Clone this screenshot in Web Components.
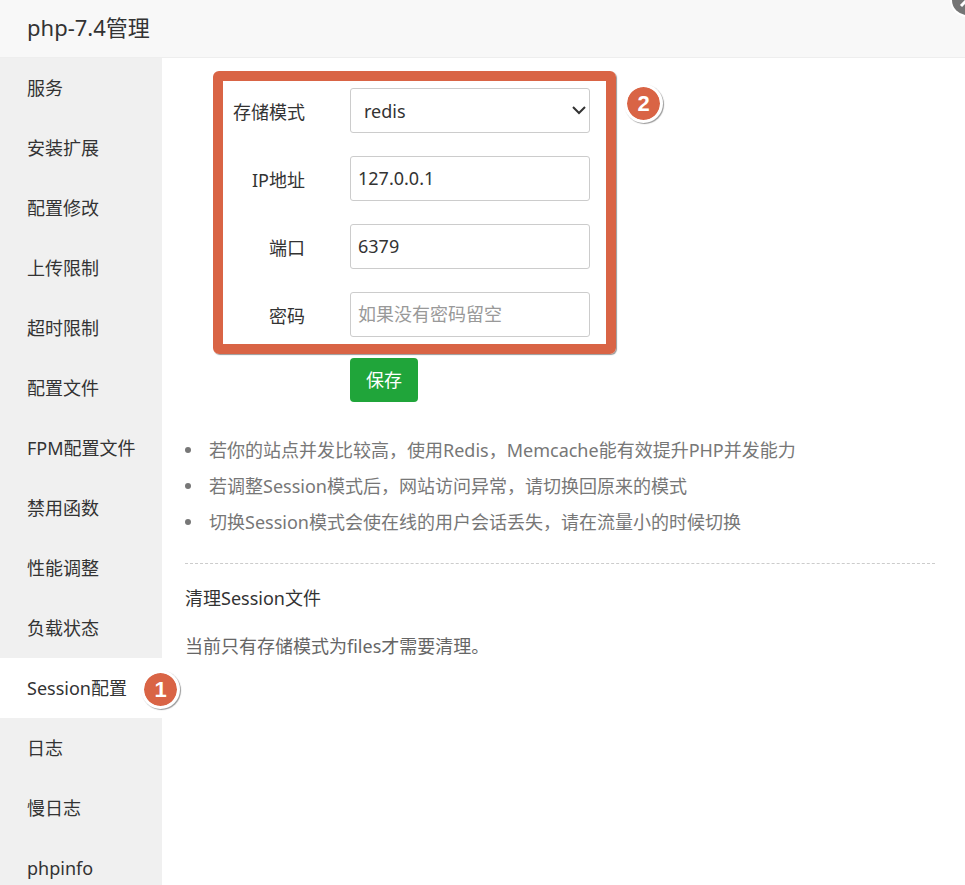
<!DOCTYPE html>
<html lang="zh-CN">
<head>
<meta charset="utf-8">
<meta name="viewport" content="width=device-width, initial-scale=1">
<title>php-7.4管理</title>
<style>
  body {
    margin: 0;
    background: #fff;
    color: #333;
    font: 18px/36px "Noto Sans", "Noto Sans CJK SC", sans-serif;
  }
</style>
</head>
<body>
<manage-dialog>
  <span slot="title">php-7.4管理</span>

  <side-menu slot="menu">
    <menu-item>服务</menu-item>
    <menu-item>安装扩展</menu-item>
    <menu-item>配置修改</menu-item>
    <menu-item>上传限制</menu-item>
    <menu-item>超时限制</menu-item>
    <menu-item>配置文件</menu-item>
    <menu-item>FPM配置文件</menu-item>
    <menu-item>禁用函数</menu-item>
    <menu-item>性能调整</menu-item>
    <menu-item>负载状态</menu-item>
    <menu-item active>Session配置<step-badge slot="badge">1</step-badge></menu-item>
    <menu-item>日志</menu-item>
    <menu-item>慢日志</menu-item>
    <menu-item>phpinfo</menu-item>
  </side-menu>

  <session-form>
    <form-field label="存储模式" type="select">
      <option>redis</option>
      <option>files</option>
      <option>memcache</option>
    </form-field>
    <form-field label="IP地址" value="127.0.0.1"></form-field>
    <form-field label="端口" value="6379"></form-field>
    <form-field label="密码" placeholder="如果没有密码留空"></form-field>
    <step-badge slot="badge">2</step-badge>
  </session-form>

  <help-list>
    <li>若你的站点并发比较高，使用Redis，Memcache能有效提升PHP并发能力</li>
    <li>若调整Session模式后，网站访问异常，请切换回原来的模式</li>
    <li>切换Session模式会使在线的用户会话丢失，请在流量小的时候切换</li>
  </help-list>

  <clean-section>
    <span slot="title">清理Session文件</span>
    当前只有存储模式为files才需要清理。
  </clean-section>
</manage-dialog>

<script>
const makeTemplate = (html) => {
  const template = document.createElement("template");
  template.innerHTML = html;
  return template;
};

class BaseElement extends HTMLElement {
  constructor() {
    super();
    this.attachShadow({ mode: "open" });
    this.shadowRoot.appendChild(this.constructor.template.content.cloneNode(true));
  }
}

// whole window: title bar, menu on the left, content on the right
class ManageDialog extends BaseElement {
  static template = makeTemplate(/*html*/ `
    <style>
      :host {
        display: flex;
        flex-direction: column;
        position: relative;
        height: 100vh;
        overflow: hidden;
      }
      header {
        flex: none;
        padding: 9px 27px 12px;
        background: #f8f8f8;
        border-bottom: 1px solid #eee;
      }
      h1 {
        margin: 0;
        font-size: 22px;
        font-weight: 400;
      }
      .close {
        position: absolute;
        top: -15px;
        right: -17px;
        width: 30px;
        height: 30px;
        padding: 0;
        border: 0;
        border-radius: 50%;
        background: #757575;
        box-shadow: 0 0 0 2px #fff;
      }
      .close svg {
        display: block;
      }
      .body {
        display: flex;
        flex: 1;
        min-height: 0;
      }
      main {
        flex: 1;
        min-width: 0;
        padding: 13px 30px 0 23px;
      }
    </style>
    <header><h1><slot name="title"></slot></h1></header>
    <button class="close" type="button" aria-label="关闭">
      <svg width="30" height="30" viewBox="0 0 30 30" fill="none" stroke="#fff" stroke-width="3">
        <path d="M9 9l12 12M21 9L9 21"/>
      </svg>
    </button>
    <div class="body">
      <slot name="menu"></slot>
      <main><slot></slot></main>
    </div>
  `);
}
customElements.define("manage-dialog", ManageDialog);

class SideMenu extends BaseElement {
  static template = makeTemplate(/*html*/ `
    <style>
      :host {
        display: block;
        flex: none;
        width: 162px;
        background: #f0f0f0;
      }
    </style>
    <nav><slot></slot></nav>
  `);
}
customElements.define("side-menu", SideMenu);

class MenuItem extends BaseElement {
  static template = makeTemplate(/*html*/ `
    <style>
      :host {
        display: block;
        position: relative;
      }
      :host([active]) {
        background: #fff;
      }
      a {
        display: block;
        padding: 12px 0 12px 27px;
        color: inherit;
        text-decoration: none;
        white-space: nowrap;
      }
      ::slotted(step-badge) {
        position: absolute;
        top: 12px;
        right: -18px;
      }
    </style>
    <a href="#"><slot></slot></a>
    <slot name="badge"></slot>
  `);
}
customElements.define("menu-item", MenuItem);

class StepBadge extends BaseElement {
  static template = makeTemplate(/*html*/ `
    <style>
      :host {
        display: block;
        box-sizing: border-box;
        width: 39px;
        height: 39px;
        border: 3px solid #fff;
        border-radius: 50%;
        background: #d96445;
        background-clip: padding-box;
        box-shadow: 1px 1px 1px #999;
        color: #fff;
        font: bold 22px/33px "Liberation Sans", sans-serif;
        text-align: center;
      }
    </style>
    <slot></slot>
  `);
}
customElements.define("step-badge", StepBadge);

class SessionForm extends BaseElement {
  static template = makeTemplate(/*html*/ `
    <style>
      :host {
        display: block;
        padding-left: 28px;
      }
      .top {
        display: flex;
        align-items: flex-start;
        gap: 8px;
      }
      .frame {
        display: flex;
        flex-direction: column;
        gap: 23px;
        padding: 7px 16px 7px 10px;
        border: 10px solid #d96445;
        border-radius: 6px;
        box-shadow: 1px 1px 1px #999;
      }
      ::slotted(step-badge) {
        margin-top: 13px;
      }
      button {
        display: block;
        margin: 4px 0 0 137px;
        padding: 4px 16px;
        border: 0;
        border-radius: 4px;
        background: #20a53a;
        color: #fff;
        font: inherit;
      }
    </style>
    <form>
      <div class="top">
        <div class="frame"><slot></slot></div>
        <slot name="badge"></slot>
      </div>
      <button type="button">保存</button>
    </form>
  `);
}
customElements.define("session-form", SessionForm);

class FormField extends BaseElement {
  static template = makeTemplate(/*html*/ `
    <style>
      :host {
        display: grid;
        grid-template-columns: 72px 240px;
        column-gap: 45px;
        align-items: center;
      }
      label {
        padding-top: 2px;
        text-align: right;
        white-space: nowrap;
      }
      .control {
        display: block;
        position: relative;
      }
      input, select {
        display: block;
        box-sizing: border-box;
        width: 100%;
        height: 45px;
        padding: 0 7px 2px;
        border: 1px solid #ccc;
        border-radius: 3px;
        background: #fff;
        color: #333;
        font: inherit;
      }
      select {
        appearance: none;
        padding: 0 32px 0 13px;
      }
      input::placeholder {
        color: #999;
      }
      svg {
        position: absolute;
        top: 18px;
        right: 3px;
        pointer-events: none;
      }
    </style>
    <label for="control"></label>
    <div class="control"></div>
  `);

  connectedCallback() {
    this.shadowRoot.querySelector("label").textContent = this.getAttribute("label");
    const box = this.shadowRoot.querySelector(".control");

    if (this.getAttribute("type") === "select") {
      box.innerHTML = `
        <select id="control"></select>
        <svg width="16" height="10" viewBox="0 0 16 10" fill="none" stroke="#333" stroke-width="2">
          <path d="M2 1l6 6 6-6"/>
        </svg>`;
      box.querySelector("select").append(...this.querySelectorAll("option"));
      return;
    }

    const input = document.createElement("input");
    input.id = "control";
    input.type = "text";
    input.value = this.getAttribute("value") || "";
    input.placeholder = this.getAttribute("placeholder") || "";
    box.appendChild(input);
  }
}
customElements.define("form-field", FormField);

class HelpList extends BaseElement {
  static template = makeTemplate(/*html*/ `
    <style>
      :host {
        display: block;
        margin-top: 30px;
        padding-bottom: 23px;
        border-bottom: 1px dashed #ccc;
        color: #777;
      }
      ul {
        margin: 0;
        padding: 0;
      }
      ::slotted(li) {
        display: flex;
        align-items: center;
        gap: 18px;
      }
      ::slotted(li)::before {
        content: "";
        flex: none;
        width: 6px;
        height: 6px;
        border-radius: 50%;
        background: currentColor;
      }
    </style>
    <ul><slot></slot></ul>
  `);
}
customElements.define("help-list", HelpList);

class CleanSection extends BaseElement {
  static template = makeTemplate(/*html*/ `
    <style>
      :host {
        display: block;
        margin-top: 16px;
      }
      h2 {
        margin: 0 0 12px;
        font-size: 18px;
        font-weight: 400;
      }
      p {
        margin: 0;
        color: #666;
      }
    </style>
    <h2><slot name="title"></slot></h2>
    <p><slot></slot></p>
  `);
}
customElements.define("clean-section", CleanSection);
</script>
</body>
</html>
